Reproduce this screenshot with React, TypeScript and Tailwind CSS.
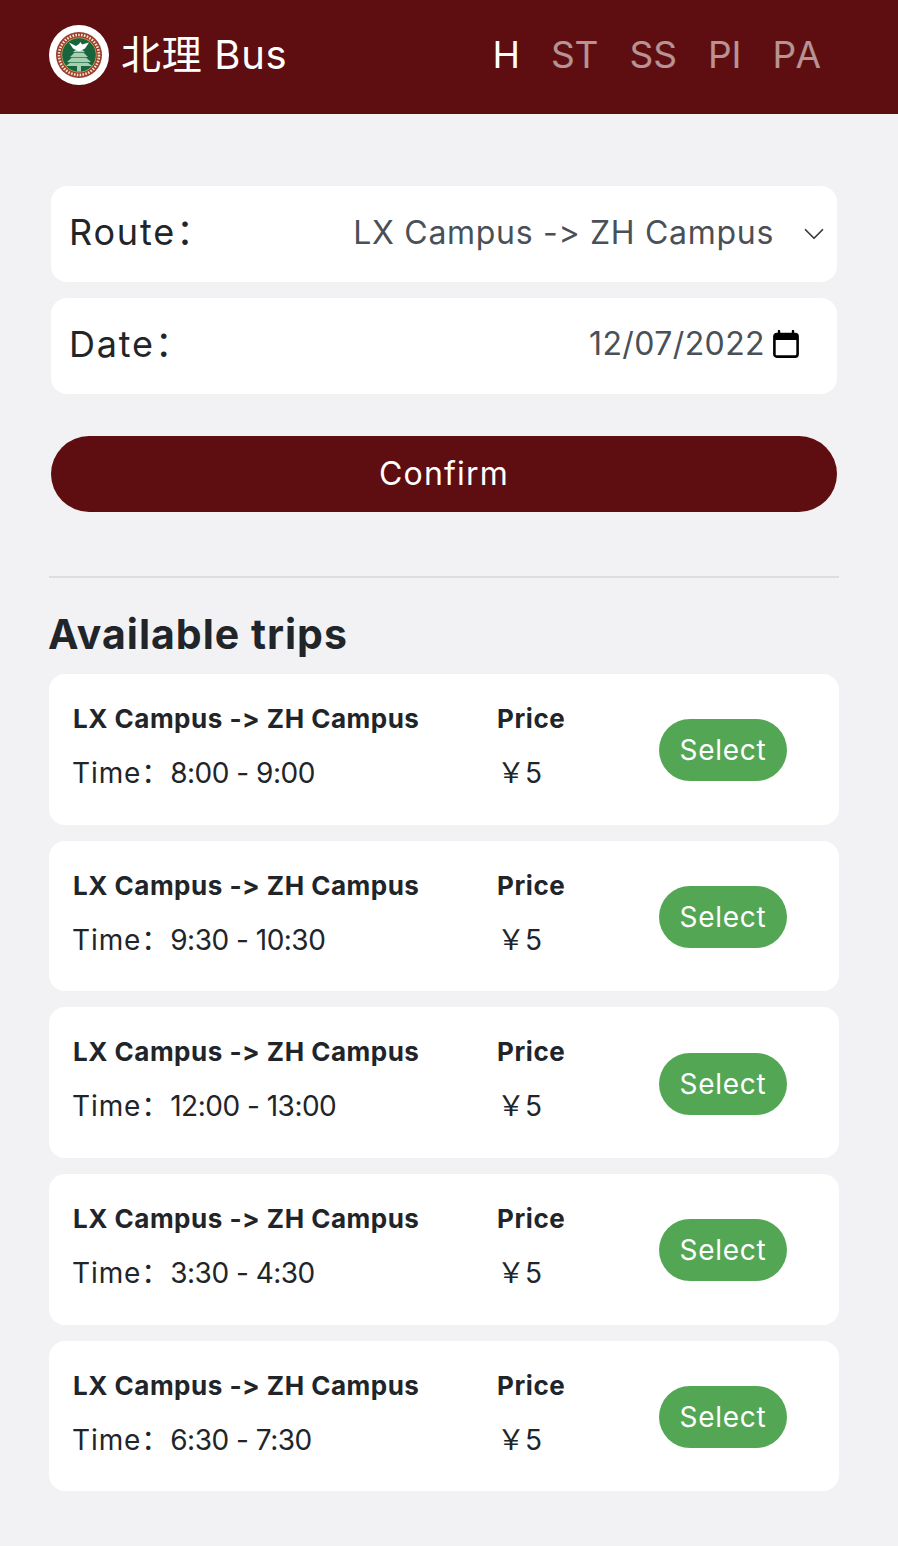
import { ChevronDown } from "lucide-react";

const font = "font-['Inter','Noto_Sans_CJK_SC',sans-serif] [font-feature-settings:'calt'_0,'liga'_0]";

const trips = ["8:00 - 9:00", "9:30 - 10:30", "12:00 - 13:00", "3:30 - 4:30", "6:30 - 7:30"];
const navItems = ["H", "ST", "SS", "PI", "PA"];

const Logo = () => (
  <svg viewBox="0 0 60 60" className="h-[60px] w-[60px] shrink-0">
    <circle cx="30" cy="30" r="30" fill="#fff" />
    <circle cx="30" cy="30" r="24" fill="#fdfbf6" />
    <circle cx="30" cy="30" r="23" fill="#9c3a2c" />
    <circle cx="30" cy="30" r="20" fill="none" stroke="#efe3cb" strokeWidth="2.6" strokeDasharray="1.6 1.3" />
    <circle cx="30" cy="30" r="17.6" fill="#c9a35a" />
    <circle cx="30" cy="30" r="16.8" fill="#17643d" />
    {/* pine */}
    <path d="M30 22 L36 27 L34 27 L39 32 L36.5 32 L42 37 L38 37 L43 41 L32 41 L32 46.5 L28 46.5 L28 41 L17 41 L22 37 L18 37 L23.5 32 L21 32 L26 27 L24 27 Z" fill="#a9cfb2" />
    <path d="M24 27.5 H36 M21.5 32.5 H38.5 M19 37.5 H41" stroke="#2f7a52" strokeWidth="0.8" />
    {/* bird */}
    <path d="M20 17.5 L27 21 L30 19 L31.5 17 L33 19.5 L40 17.5 L36 23.5 L31 26 L29 26 L24 23.5 Z" fill="#fff" />
  </svg>
);

const CalendarIcon = () => (
  <svg viewBox="0 0 26 28" className="h-7 w-[26px]">
    <path d="M6 1v4M20 1v4" stroke="#000" strokeWidth="2.4" strokeLinecap="round" />
    <rect x="1.4" y="4" width="23.2" height="22.6" rx="2.4" fill="#fff" stroke="#000" strokeWidth="2.6" />
    <rect x="1.4" y="4" width="23.2" height="6" fill="#000" />
  </svg>
);

const TripCard = ({ time }: { time: string }) => (
  <div className="flex h-[150.67px] rounded-[16px] bg-white pl-6">
    <div className="w-[424px] pt-[30px]">
      <div className="text-[26px] leading-[30px] font-bold tracking-[0.5px] text-[#212529]">LX Campus -&gt; ZH Campus</div>
      <div className="mt-[20px] -ml-px text-[28px] leading-[38px] text-[#212529]">
        <span className="tracking-[0.9px]">Time：</span>
        <span className="tracking-[-0.5px]">{time}</span>
      </div>
    </div>
    <div className="w-[162px] pt-[30px]">
      <div className="text-[26px] leading-[30px] font-bold tracking-[0.6px] text-[#212529]">Price</div>
      <div className="mt-[20px] text-[28px] leading-[38px] text-[#212529]">￥5</div>
    </div>
    <div className="pt-[45.3px]">
      <button className="h-[62px] w-[128px] rounded-full bg-[#53a653] text-[28px] tracking-[0.7px] text-white">Select</button>
    </div>
  </div>
);

export default function App() {
  return (
    <div className={`${font} min-h-[1546px] bg-[#f2f2f5]`}>
      <header className="flex h-[114px] items-center justify-between bg-[#5e0e10] pr-[75px] pb-1 pl-[49px]">
        <div className="flex items-center gap-3">
          <Logo />
          <span className="text-[40px] tracking-[0.7px] text-white">北理 Bus</span>
        </div>
        <nav className="flex gap-[31px] text-[37px]">
          {navItems.map((item, i) => (
            <span key={item} className={`last:tracking-[2px] ${i === 0 ? "text-white" : "text-white/55"}`}>
              {item}
            </span>
          ))}
        </nav>
      </header>

      <main className="pt-[72px] pr-[59px] pl-[49px]">
        <div className="flex flex-col gap-4 px-[2px]">
          <div className="flex h-24 items-center justify-between rounded-[16px] bg-white pr-[6px] pl-[18px]">
            <span className="pb-1 text-[36px] tracking-[1.8px] text-[#212529]">Route：</span>
            <div className="flex items-center gap-[23px]">
              <span className="pb-[2px] text-[32px] tracking-[0.7px] text-[#495057]">LX Campus -&gt; ZH Campus</span>
              <ChevronDown className="h-[34px] w-[34px] text-[#343a40]" strokeWidth={1.2} />
            </div>
          </div>
          <div className="flex h-24 items-center justify-between rounded-[16px] bg-white pr-[38px] pl-[18px]">
            <span className="pb-1 text-[36px] tracking-[1.8px] text-[#212529]">Date：</span>
            <div className="flex items-center gap-2 pb-1">
              <span className="text-[32px] tracking-[0.4px] text-[#495057]">12/07/2022</span>
              <CalendarIcon />
            </div>
          </div>
        </div>

        <div className="mt-[42px] px-[2px]">
          <button className="h-[76px] w-full rounded-full bg-[#5e0e10] text-[32px] tracking-[1.2px] text-white">Confirm</button>
        </div>

        <hr className="mt-16 border-t-2 border-[#dcdde0]" />

        <h2 className="mt-[30px] -ml-px text-[41px] leading-[52px] font-bold tracking-[1px] text-[#212529]">Available trips</h2>

        <div className="mt-[14px] flex flex-col gap-4">
          {trips.map((t) => (
            <TripCard key={t} time={t} />
          ))}
        </div>
      </main>
    </div>
  );
}
